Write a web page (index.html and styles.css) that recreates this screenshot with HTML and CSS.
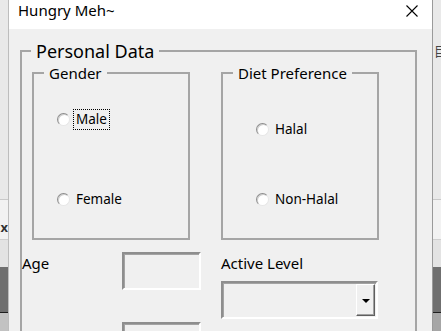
FILE: index.html
```html
<!DOCTYPE html>
<html lang="en">
<head>
    <meta charset="UTF-8"/>
    <meta name="viewport" content="width=device-width, initial-scale=1.0"/>
    <title>Hungry Meh~</title>
    <link rel="stylesheet" href="styles.css">
</head>
<body>
<div class="screen">
    <div class="side side-left">
        <div class="side-block side-top"></div>
        <div class="side-block side-mid"><span class="side-glyph">x</span></div>
        <div class="side-block side-low"></div>
        <div class="side-block side-dark"></div>
        <div class="side-block side-bottom"></div>
    </div>

    <div class="window">
        <div class="titlebar">
            <span class="title">Hungry Meh~</span>
            <svg class="close" viewBox="0 0 12 12">
                <path d="M0.5 0.5 L11.5 11.5 M11.5 0.5 L0.5 11.5" stroke="#000" stroke-width="1.1" fill="none"/>
            </svg>
        </div>
        <div class="client">
            <fieldset class="frame frame-main">
                <legend>Personal Data</legend>
                <div class="choices">
                    <fieldset class="frame frame-sub gender">
                        <legend>Gender</legend>
                        <label class="opt opt-male"><span class="radio"></span><span class="opt-text focus">Male</span></label>
                        <label class="opt opt-female"><span class="radio"></span><span class="opt-text">Female</span></label>
                    </fieldset>
                    <fieldset class="frame frame-sub diet">
                        <legend>Diet Preference</legend>
                        <label class="opt opt-halal"><span class="radio"></span><span class="opt-text">Halal</span></label>
                        <label class="opt opt-nonhalal"><span class="radio"></span><span class="opt-text">Non-Halal</span></label>
                    </fieldset>
                </div>
                <div class="lower">
                    <div class="lower-left">
                        <div class="age-row">
                            <span class="field-label age-label">Age</span>
                            <div class="textbox"></div>
                        </div>
                        <div class="textbox textbox-next"></div>
                    </div>
                    <div class="lower-right">
                        <span class="field-label">Active Level</span>
                        <div class="combo">
                            <div class="combo-btn"><span class="arrow"></span></div>
                        </div>
                    </div>
                </div>
            </fieldset>
        </div>
    </div>

    <div class="side side-right">
        <div class="side-block side-top"><span class="side-icon">目</span></div>
        <div class="side-block side-mid"></div>
        <div class="side-block side-low"></div>
        <div class="side-block side-dark"></div>
        <div class="side-block side-bottom"></div>
    </div>
</div>
</body>
</html>
```

FILE: styles.css
```css
* {
    margin: 0;
    padding: 0;
    box-sizing: border-box;
}

html body {
    width: 441px;
    height: 331px;
    overflow: hidden;
    font-family: "Noto Sans", "Open Sans", sans-serif;
    color: #000;
    background-color: #e9e9e9;
}

.screen {
    display: flex;
    height: 331px;
}

/* bits of the app behind the dialog */
.side {
    width: 8px;
    flex-shrink: 0;
    display: flex;
    flex-direction: column;
    overflow: hidden;
    background-color: #e9e9e9;
}

.side-top {
    height: 200px;
    border-bottom: 1px solid #c9c9c9;
    position: relative;
}

.side-mid {
    height: 40px;
    border-bottom: 1px solid #cfcfcf;
    background-color: #f2f2f2;
    position: relative;
}

.side-low {
    height: 27px;
    background-color: #e3e3e3;
}

.side-dark {
    height: 46px;
    background-color: #6f6f6f;
    border-bottom: 1px solid #1e1e1e;
}

.side-bottom {
    flex: 1;
    background-color: #a6a6a6;
}

.side-left .side-bottom {
    background-color: #c2c2c2;
}

.side-glyph {
    position: absolute;
    right: 0;
    top: 19px;
    font-size: 13px;
    font-weight: 700;
    line-height: 16px;
    color: #333;
}

.side-icon {
    position: absolute;
    left: 1px;
    top: 43px;
    font-family: "Noto Sans CJK SC", sans-serif;
    font-size: 13px;
    line-height: 16px;
    color: #444;
}

/* dialog */
.window {
    width: 425px;
    flex-shrink: 0;
    background-color: #f0f0f0;
    border-left: 1px solid #bdbdbd;
    border-right: 1px solid #9a9a9a;
}

.titlebar {
    height: 29px;
    display: flex;
    justify-content: space-between;
    padding: 0 14px 0 9px;
    background-color: #fff;
}

.title {
    font-size: 15px;
    line-height: 20px;
}

.close {
    width: 12px;
    height: 12px;
    margin-top: 5px;
}

.client {
    padding: 11px 0 0 11px;
}

.frame {
    margin: 0;
    padding: 0;
    min-width: 0;
    border: 2px solid #a5a5a5;
}

.frame-main {
    width: 397px;
    height: 340px;
}

.frame-main > legend {
    font-size: 18px;
    line-height: 22px;
    margin-left: 9px;
    padding: 0 5px;
}

.choices {
    display: flex;
    gap: 31px;
    margin-top: 2px;
    padding-left: 10px;
}

.frame-sub {
    width: 158px;
    height: 176px;
    display: flex;
    flex-direction: column;
    align-items: flex-start;
}

.frame-sub > legend {
    font-size: 15px;
    line-height: 18px;
    margin-left: 10px;
    padding: 0 5px;
    white-space: nowrap;
}

.opt {
    display: flex;
    align-items: center;
    height: 21px;
    font-size: 13.5px;
}

.gender .opt {
    margin-left: 23px;
}

.diet .opt {
    margin-left: 33px;
}

.opt-male {
    margin-top: 27px;
}

.opt-female {
    margin-top: 59px;
}

.opt-halal {
    margin-top: 37px;
}

.opt-nonhalal {
    margin-top: 49px;
}

.radio {
    width: 13px;
    height: 13px;
    margin-right: 3px;
    border-radius: 50%;
    background-color: #fff;
    border: 1px solid;
    border-color: #8d8d8d #e6e6e6 #e6e6e6 #8d8d8d;
    box-shadow: inset 1px 1px #cfcfcf;
}

.opt-text {
    padding: 0 2px;
    line-height: 19px;
    border: 1px dotted transparent;
}

.opt-text.focus {
    border-color: #000;
}

.lower {
    display: flex;
    margin-top: 12px;
}

.lower-left {
    width: 179px;
}

.age-row {
    display: flex;
}

.field-label {
    font-size: 15px;
    line-height: 20px;
    padding-top: 1px;
}

.age-label {
    width: 100px;
}

.textbox {
    width: 79px;
    height: 38px;
    background-color: #f0f0f0;
    border: 2px solid;
    border-color: #8e8e8e #fff #fff #8e8e8e;
    box-shadow: inset 1px 1px #a3a3a3;
}

.textbox-next {
    margin: 32px 0 0 100px;
}

.lower-right {
    display: flex;
    flex-direction: column;
    margin-left: 20px;
}

.combo {
    width: 157px;
    height: 38px;
    margin-top: 8px;
    display: flex;
    justify-content: flex-end;
    padding: 1px 1px 1px 0;
    background-color: #f0f0f0;
    border: 2px solid;
    border-color: #8e8e8e #fff #fff #8e8e8e;
    box-shadow: inset 1px 1px #a3a3a3;
}

.combo-btn {
    width: 19px;
    display: flex;
    align-items: center;
    justify-content: center;
    background-color: #f0f0f0;
    border: 1px solid;
    border-color: #fff #5f5f5f #5f5f5f #fff;
    box-shadow: inset -1px -1px #a0a0a0;
}

.arrow {
    width: 0;
    height: 0;
    margin-top: 1px;
    border-left: 4px solid transparent;
    border-right: 4px solid transparent;
    border-top: 4px solid #000;
}
```
